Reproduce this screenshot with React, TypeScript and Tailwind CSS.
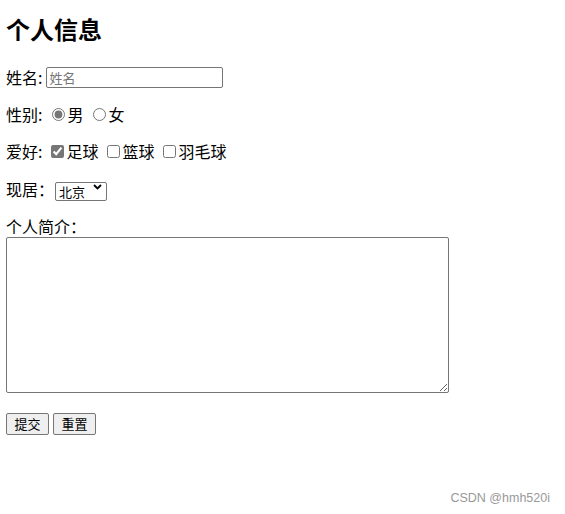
import { useState } from 'react'

const cjk = "font-['Noto_Sans_CJK_SC','Microsoft_YaHei',sans-serif]"

export default function App() {
  const [sex, setSex] = useState('男')
  const [hobby, setHobby] = useState<Record<string, boolean>>({ 足球: true, 篮球: false, 羽毛球: false })

  return (
    <div className={`relative w-[565px] h-[514px] bg-white text-black px-[6px] ${cjk}`}>
      <h2 className="pt-[15px] h-[43px] text-[24px] leading-[28px] font-bold">个人信息</h2>

      <form className="flex flex-col text-[16px]">
        {/* 姓名 */}
        <div className="mt-[24px] h-[21px] flex items-center">
          <span className="leading-[21px]">姓名:</span>
          <input
            type="text"
            placeholder="姓名"
            className="ml-[4px] w-[177px] h-[21px] border border-[#767676] rounded-[2px] px-[2px] text-[13px] leading-[19px] placeholder:text-[#757575] outline-none"
          />
        </div>

        {/* 性别 */}
        <div className="mt-[16px] h-[21px] flex items-center">
          <span className="leading-[21px]">性别:</span>
          {['男', '女'].map((s) => (
            <label key={s} className="flex items-center ml-[10px]">
              <input
                type="radio"
                name="sex"
                checked={sex === s}
                onChange={() => setSex(s)}
                className="m-0 w-[13px] h-[13px] accent-[#767676]"
              />
              <span className="ml-[2px] leading-[21px]">{s}</span>
            </label>
          ))}
        </div>

        {/* 爱好 */}
        <div className="mt-[16px] h-[21px] flex items-center">
          <span className="leading-[21px]">爱好:</span>
          {['足球', '篮球', '羽毛球'].map((h) => (
            <label key={h} className="flex items-center ml-[9px]">
              <input
                type="checkbox"
                checked={hobby[h]}
                onChange={() => setHobby({ ...hobby, [h]: !hobby[h] })}
                className="m-0 w-[13px] h-[13px] accent-[#767676]"
              />
              <span className="ml-[2px] leading-[21px]">{h}</span>
            </label>
          ))}
        </div>

        {/* 现居 */}
        <div className="mt-[17px] h-[21px] flex items-center">
          <span className="leading-[21px]">现居：</span>
          <div className="relative ml-[1px]">
            <select className="appearance-none w-[52px] h-[19px] border border-[#767676] rounded-[2px] pl-[3px] text-[13px] leading-[15px] pb-[1px] outline-none">
              <option>北京</option>
              <option>上海</option>
              <option>广州</option>
            </select>
            <svg
              className="absolute right-[5px] top-[6.5px] pointer-events-none"
              width="9"
              height="6"
              viewBox="0 0 9 6"
            >
              <path d="M1 1 L4.5 4.5 L8 1" fill="none" stroke="#000" strokeWidth="1.8" />
            </svg>
          </div>
        </div>

        {/* 个人简介 */}
        <div className="mt-[16px] h-[21px] leading-[21px]">个人简介：</div>
        <textarea className="w-[443px] h-[156px] border border-[#767676] rounded-[2px] resize-y outline-none" />

        {/* 按钮 */}
        <div className="mt-[20px] flex gap-[4px]">
          <button
            type="submit"
            className="w-[43px] h-[22px] border border-[#767676] rounded-[2px] bg-[#efefef] text-[13px] leading-[20px]"
          >
            提交
          </button>
          <button
            type="reset"
            className="w-[43px] h-[22px] border border-[#767676] rounded-[2px] bg-[#efefef] text-[13px] leading-[20px]"
          >
            重置
          </button>
        </div>
      </form>

      <div className="absolute right-[15px] bottom-[6px] text-[12.5px] text-[#999] font-['Liberation_Sans',sans-serif]">
        CSDN @hmh520i
      </div>
    </div>
  )
}
